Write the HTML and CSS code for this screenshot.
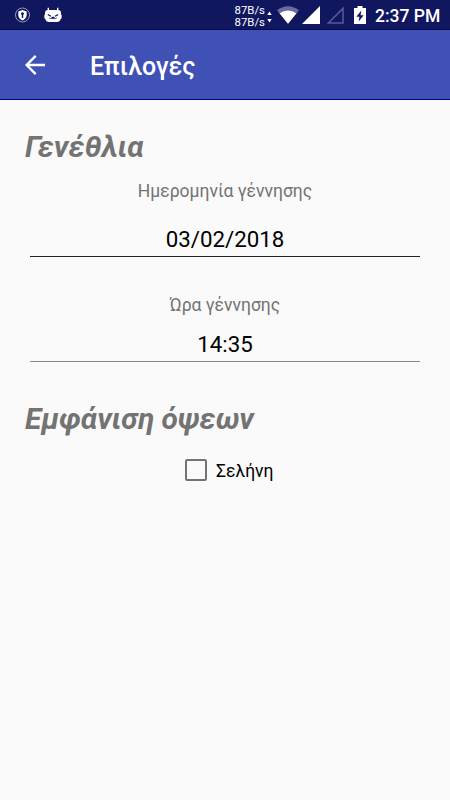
FILE: index.html
```html
<!DOCTYPE html>
<html lang="el">
<head>
    <meta charset="UTF-8">
    <meta name="viewport" content="width=device-width, initial-scale=1.0">
    <title>Επιλογές</title>
    <link rel="stylesheet" href="styles.css">
</head>
<body>
    <div class="status-bar">
        <svg class="shield-icon" width="16" height="16" viewBox="0 0 16 16">
            <circle cx="7.500" cy="8" r="7" fill="none" stroke="#a5a8cd" stroke-width=".9"/>
            <path d="M7.500 3L11.700 4.500V8c0 2.500-1.600 4.400-4.200 5.600C4.900 12.400 3.300 10.500 3.300 8V4.500z" fill="#fff"/>
            <path d="M7.500 5.200a1.500 1.500 0 0 1 .7 2.800V11H6.800V8A1.500 1.500 0 0 1 7.500 5.200z" fill="#10175f"/>
        </svg>
        <svg class="cat-icon" width="18" height="16" viewBox="0 0 18 16">
            <path d="M4.300 .8V4M13.700 .8V4" stroke="#fff" stroke-width="1.400"/>
            <path d="M4 3h10q3 0 3 3v1q1 1 .7 3.500q-.3 1-1 1.500q-.7 3-3.700 3H5q-3 0-3.700-3q-.7-.5-1-1.500Q0 8 1 7V6q0-3 3-3z" fill="#fff"/>
            <path d="M3.800 7.500l3.200 1.800M14.200 7.500L11 9.300" fill="none" stroke="#10175f" stroke-width="1.200"/>
            <path d="M5 10.700q2 2 4 .5q2 1.500 4-.5" fill="none" stroke="#5b5f94" stroke-width="1"/>
            <path d="M7.500 9.800h3v1.800h-3z" fill="#10175f"/>
        </svg>
        <div class="net-speed">
            <span>87B/s</span>
            <span>87B/s</span>
        </div>
        <svg class="net-arrows" width="5" height="12" viewBox="0 0 5 12">
            <path d="M2.500 .5L4.700 4H.3zM2.500 11.500L4.700 8H.3z" fill="#fff"/>
        </svg>
        <svg class="wifi-icon" width="22" height="18" viewBox="0 0 22 18">
            <path d="M0 4.300Q11 -3.600 22 4.300L11 17.800z" fill="#686ba3"/>
            <path d="M2.500 7.200Q11 1.800 19.500 7.200L11 17.800z" fill="#fff"/>
        </svg>
        <svg class="signal-icon" width="18" height="18" viewBox="0 0 18 18">
            <path d="M18 0V18H0z" fill="#fff"/>
        </svg>
        <svg class="signal-icon signal-empty" width="18" height="18" viewBox="0 0 18 18">
            <path d="M17 2.400V17H2.400z" fill="none" stroke="#585b98" stroke-width="1.500"/>
        </svg>
        <svg class="battery-icon" width="12" height="18" viewBox="0 0 12 18">
            <path d="M3.500 0h5v2H12v16H0V2h3.500z" fill="#fff"/>
            <path d="M7.300 4.500L2.300 10.800H5.400L4.700 15.500L9.700 9.200H6.600z" fill="#10175f"/>
        </svg>
        <span class="clock">2:37 PM</span>
    </div>

    <header class="toolbar">
        <svg class="back-icon" width="20" height="20" viewBox="0 0 20 20">
            <path d="M20 10H1.800M10.700 .9L1.600 10l9.100 9.100" fill="none" stroke="#fff" stroke-width="2.400"/>
        </svg>
        <h1>Επιλογές</h1>
    </header>

    <main class="settings">
        <h2>Γενέθλια</h2>
        <label class="date-label" for="birth-date">Ημερομηνία γέννησης</label>
        <input class="date-field" id="birth-date" type="text" value="03/02/2018">
        <label class="time-label" for="birth-time">Ώρα γέννησης</label>
        <input class="time-field" id="birth-time" type="text" value="14:35">

        <h2 class="aspects">Εμφάνιση όψεων</h2>
        <label class="check-row">
            <input type="checkbox">
            <span>Σελήνη</span>
        </label>
    </main>
</body>
</html>
```
FILE: styles.css
```css
* {
    margin: 0;
    padding: 0;
    box-sizing: border-box;
}

body {
    min-height: 800px;
    background: #fafafa;
    font-family: Roboto, "Noto Sans", sans-serif;
}

svg {
    display: block;
    flex: none;
}

.status-bar {
    display: flex;
    align-items: center;
    height: 30px;
    padding: 0 10px 0 15px;
    background: #10175f;
    border-bottom: 1px solid #050b50;
    color: #fff;
}

.cat-icon {
    margin-left: 13px;
}

.net-speed {
    display: flex;
    flex-direction: column;
    margin: 2px 0 0 auto;
    font-size: 11.4px;
    line-height: 12px;
}

.net-arrows {
    margin: 5px 5px 0 2px;
}

.signal-icon {
    margin-left: 3px;
}

.signal-empty {
    margin-left: 6px;
}

.battery-icon {
    margin-left: 10px;
}

.clock {
    width: 65px;
    margin-left: 9px;
    padding-top: 3px;
    font-size: 17.5px;
    font-weight: 500;
    line-height: 28px;
    white-space: nowrap;
}

.toolbar {
    display: flex;
    align-items: center;
    height: 70px;
    padding-left: 25px;
    background: #3f51b5;
    border-bottom: 1px solid #00098c;
    color: #fff;
}

.toolbar h1 {
    margin-left: 45px;
    padding-top: 4px;
    font-size: 25px;
    font-weight: 500;
    line-height: 30px;
}

.settings {
    display: flex;
    flex-direction: column;
    padding: 27px 30px 0;
}

h2 {
    margin-left: -5px;
    color: #737373;
    font-size: 29.9px;
    font-style: italic;
    font-weight: 700;
    line-height: 40px;
}

.date-label,
.time-label {
    color: #737373;
    font-size: 17.5px;
    line-height: 22px;
    text-align: center;
}

.date-label {
    margin-top: 13px;
}

.time-label {
    margin-top: 37px;
}

.date-field,
.time-field {
    width: 100%;
    height: 36px;
    border: none;
    border-bottom: 1px solid #222;
    outline: none;
    background: none;
    color: #000;
    font-family: inherit;
    font-size: 22.3px;
    text-align: center;
}

.date-field {
    margin-top: 19px;
}

.time-field {
    margin-top: 10px;
    border-bottom-color: #888;
}

.aspects {
    margin-top: 37px;
}

.check-row {
    display: flex;
    align-items: flex-start;
    margin: 19px 0 0 155px;
    font-size: 17.5px;
    line-height: 24px;
}

.check-row input {
    width: 22px;
    height: 22px;
    margin: 1px 9px 0 0;
    appearance: none;
    border: 2px solid #737373;
    border-radius: 2px;
}

.check-row span {
    padding-top: 1px;
}
```
